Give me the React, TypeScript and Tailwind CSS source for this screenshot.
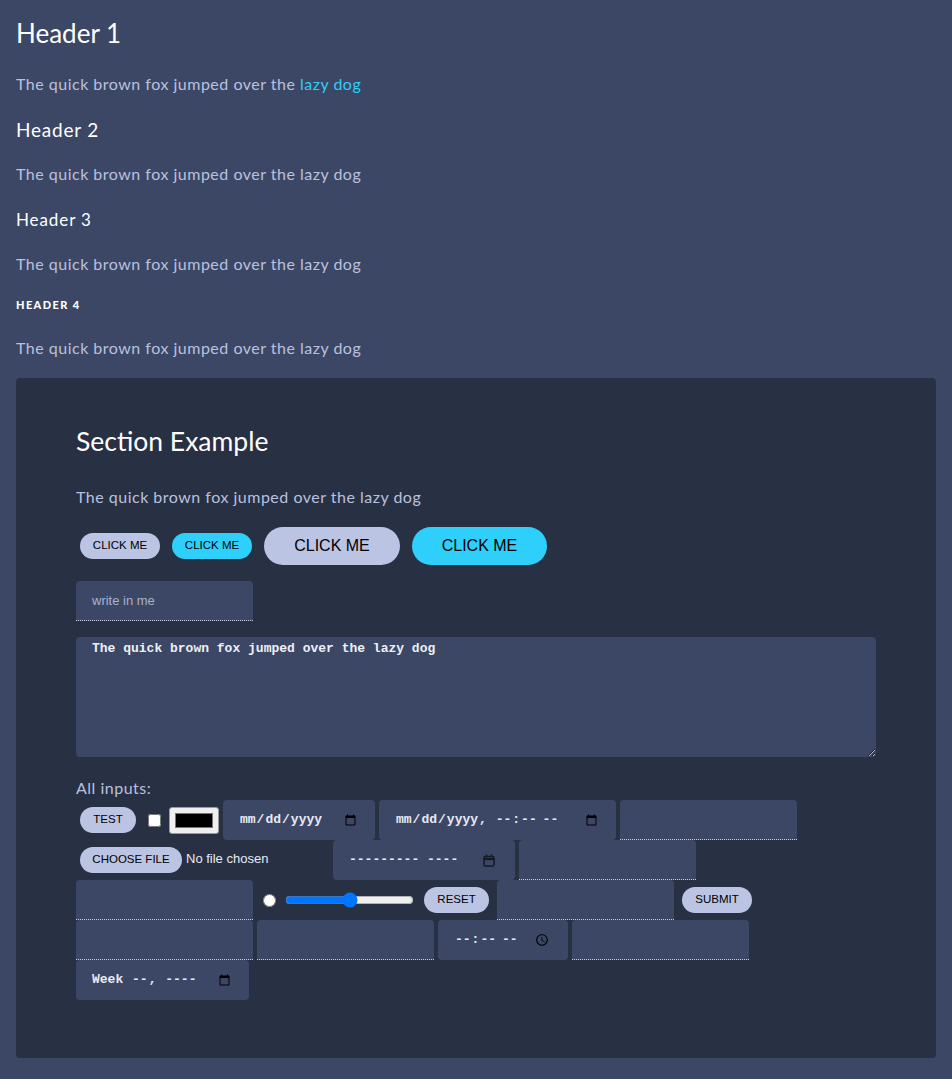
import React from 'react';

const fieldBase = 'h-10 bg-[#3c4766] text-[#e8eaf2] outline-none';
const textField = `${fieldBase} rounded-t-[4px] border-b border-dotted border-[#c9cee2] px-4 font-['Liberation_Sans',sans-serif] text-[13px] placeholder:text-[#a9b1cd]`;
const dateField = `${fieldBase} rounded-[4px] px-4 font-['Liberation_Mono',monospace] font-bold text-[13px]`;
const pill = "rounded-full bg-[#bbc4e2] text-black uppercase font-['Liberation_Sans',sans-serif]";

const Para = ({ children, className = '' }: { children: React.ReactNode; className?: string }) => (
  <p className={`text-[16px] leading-6 tracking-[0.5px] text-[#b9c1de] ${className}`}>{children}</p>
);

const CalendarIcon = () => (
  <svg width="12" height="13" viewBox="0 0 12 13" fill="none" stroke="#151a27" strokeWidth="1.6">
    <rect x="1" y="2.5" width="10" height="9.5" rx="1.5" />
    <line x1="1" y1="5" x2="11" y2="5" strokeWidth="2.2" />
    <line x1="3.5" y1="0.5" x2="3.5" y2="3" />
    <line x1="8.5" y1="0.5" x2="8.5" y2="3" />
  </svg>
);

const App = () => {
  return (
    <div className="min-h-screen bg-[#3c4766] px-4 pt-4 pb-[21px] font-['Lato','Noto_Sans',sans-serif]">
      <h1 className="text-[26px] leading-[34px] text-white">Header 1</h1>
      <Para className="mt-[22px]">
        The quick brown fox jumped over the <a href="#" className="text-[#2ecdf7]">lazy dog</a>
      </Para>
      <h2 className="mt-5 text-[19px] leading-7 tracking-[0.8px] text-white">Header 2</h2>
      <Para className="mt-[18px]">The quick brown fox jumped over the lazy dog</Para>
      <h3 className="mt-5 text-[17px] leading-7 tracking-[0.9px] text-white">Header 3</h3>
      <Para className="mt-[18px]">The quick brown fox jumped over the lazy dog</Para>
      <h4 className="mt-[21px] text-[11px] leading-4 font-black uppercase tracking-[1.4px] text-white">Header 4</h4>
      <Para className="mt-[23px]">The quick brown fox jumped over the lazy dog</Para>

      <section className="mt-[18px] rounded-[4px] bg-[#283044] px-[60px] pt-[46px] pb-[58px]">
        <h2 className="text-[26.5px] leading-[34px] text-white">Section Example</h2>
        <Para className="mt-[27px]">The quick brown fox jumped over the lazy dog</Para>

        <div className="mt-[18px] flex h-[38px] items-center">
          <button className={`${pill} ml-1 h-[26px] w-20 text-[11.5px]`}>Click me</button>
          <button className="ml-3 h-[26px] w-20 rounded-full bg-[#2ed0fb] text-[11.5px] uppercase text-black font-['Liberation_Sans',sans-serif]">Click me</button>
          <button className={`${pill} ml-3 h-[38px] w-[136px] text-[16px]`}>Click me</button>
          <button className="ml-3 h-[38px] w-[135px] rounded-full bg-[#2ed0fb] text-[16px] uppercase text-black font-['Liberation_Sans',sans-serif]">Click me</button>
        </div>

        <input type="text" placeholder="write in me" className={`${textField} mt-4 block w-[177px]`} />

        <textarea
          className="mt-4 block h-[120px] w-full rounded-[4px] bg-[#3c4766] px-4 py-[2px] font-['Liberation_Mono',monospace] text-[13px] font-bold text-[#eef0f6] outline-none"
          defaultValue="The quick brown fox jumped over the lazy dog"
        />

        <p className="mt-[19px] text-[16px] leading-6 tracking-[0.5px] text-[#b9c1de]">All inputs:</p>

        <div className="flex h-10 items-center">
          <button className={`${pill} ml-1 h-[26px] w-14 text-[11.5px]`}>Test</button>
          <input type="checkbox" className="ml-3 h-[13px] w-[13px]" />
          <span className="ml-2 flex h-[27px] w-[50px] rounded-[3px] border border-[#9a9a9a] bg-[#efefef] px-[5px] py-[5px]">
            <span className="h-full w-full border border-[#777] bg-black" />
          </span>
          <input type="date" className={`${dateField} ml-1 w-[152px]`} />
          <input type="datetime-local" className={`${dateField} ml-1 w-[237px]`} />
          <input type="text" className={`${textField} ml-1 w-[177px]`} />
        </div>

        <div className="flex h-10 items-center">
          <input
            type="file"
            className="w-[253px] text-[13px] text-[#e8eaf2] font-['Liberation_Sans',sans-serif] file:ml-1 file:mr-1 file:h-[26px] file:w-[102px] file:rounded-full file:border-0 file:bg-[#bbc4e2] file:text-[11.5px] file:uppercase file:text-black"
          />
          <div className={`${dateField} ml-1 flex w-[182px] items-center justify-between pr-5 text-[#e8eaf2]`}>
            <span>--------- ----</span>
            <CalendarIcon />
          </div>
          <input type="text" className={`${textField} ml-1 w-[177px]`} />
        </div>

        <div className="flex h-10 items-center">
          <input type="text" className={`${textField} w-[177px]`} />
          <input type="radio" className="ml-[10px] h-[13px] w-[13px]" />
          <input type="range" defaultValue={50} className="ml-[9px] w-[129px]" />
          <button className={`${pill} ml-[10px] h-[26px] w-[65px] text-[11.5px]`}>Reset</button>
          <input type="text" className={`${textField} ml-2 w-[177px]`} />
          <button className={`${pill} ml-2 h-[26px] w-[70px] text-[11.5px]`}>Submit</button>
        </div>

        <div className="flex h-10 items-center">
          <input type="text" className={`${textField} w-[177px]`} />
          <input type="text" className={`${textField} ml-1 w-[177px]`} />
          <input type="time" className={`${dateField} ml-1 w-[130px]`} />
          <input type="text" className={`${textField} ml-1 w-[177px]`} />
        </div>

        <div className="flex h-10 items-center">
          <input type="week" className={`${dateField} w-[173px]`} />
        </div>
      </section>
    </div>
  );
};

export default App;
